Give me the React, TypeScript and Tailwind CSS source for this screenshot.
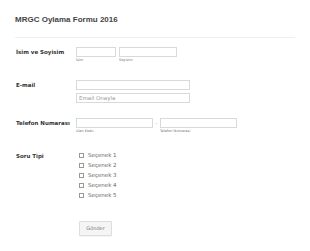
const labelCls = "w-[60px] shrink-0 text-[5.5px] font-bold text-[#333] leading-[10px]";
const inputCls = "h-[10px] border border-[#d9d9d9] bg-white";
const subCls = "mt-[1px] text-[3.5px] leading-[5px] text-[#777]";

export default function App() {
  const options = ["Seçenek 1", "Seçenek 2", "Seçenek 3", "Seçenek 4", "Seçenek 5"];

  return (
    <div className="w-[310px] h-[251px] bg-white font-['DejaVu_Sans',sans-serif] overflow-hidden">
      <div className="px-[15px] pt-[15px]">
        <h1 className="font-['Liberation_Sans',sans-serif] text-[8px] leading-[10px] font-bold text-[#444]">
          MRGC Oylama Formu 2016
        </h1>
        <div className="mt-[12px] border-t border-[#eeeeee]" />
      </div>

      <div className="pl-[16px] pt-[9px]">
        <div className="flex">
          <div className={labelCls}>İsim ve Soyisim</div>
          <div className="flex gap-[3px]">
            <div>
              <div className={`${inputCls} w-[40px]`} />
              <div className={subCls}>İsim</div>
            </div>
            <div>
              <div className={`${inputCls} w-[58px]`} />
              <div className={subCls}>Soyisim</div>
            </div>
          </div>
        </div>

        <div className="flex mt-[17px]">
          <div className={labelCls}>E-mail</div>
          <div className="flex flex-col gap-[3px]">
            <div className={`${inputCls} w-[114px]`} />
            <div className={`${inputCls} w-[114px] px-[2px] text-[5.5px] leading-[8px] text-[#999]`}>Email Onayla</div>
          </div>
        </div>

        <div className="flex mt-[15px]">
          <div className={labelCls}>Telefon Numarası</div>
          <div className="flex">
            <div>
              <div className={`${inputCls} w-[77px]`} />
              <div className={subCls}>Alan Kodu</div>
            </div>
            <div className="w-[7px] text-center text-[5px] leading-[10px] text-[#999]">-</div>
            <div>
              <div className={`${inputCls} w-[77px]`} />
              <div className={subCls}>Telefon Numarası</div>
            </div>
          </div>
        </div>

        <div className="flex mt-[16px]">
          <div className={`${labelCls} pt-[1px]`}>Soru Tipi</div>
          <div className="pl-[3px] flex flex-col">
            {options.map((o) => (
              <label key={o} className="flex items-center h-[10px] gap-[4px] text-[5.5px] text-[#666]">
                <span className="w-[5px] h-[5px] border border-[#999] bg-white" />
                <span>{o}</span>
              </label>
            ))}
          </div>
        </div>

        <div className="flex pl-[63px] mt-[21px]">
          <button className="w-[33px] h-[15px] border border-[#ddd] bg-[#f5f5f5] rounded-[1px] text-[5px] text-[#777] shadow-[0_1px_1px_rgba(0,0,0,0.05)]">
            Gönder
          </button>
        </div>
      </div>
    </div>
  );
}
